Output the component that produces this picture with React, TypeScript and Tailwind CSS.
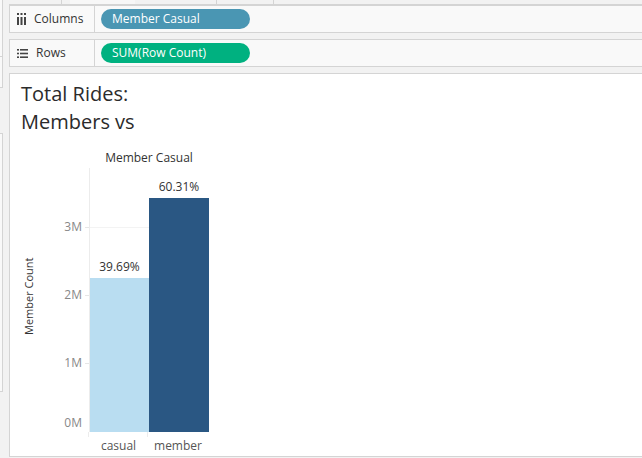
const font = { fontFamily: '"Open Sans", "Liberation Sans", sans-serif' };

const ColumnsIcon = () => (
  <svg width="9" height="12" viewBox="0 0 9 12" className="shrink-0">
    <rect x="0" y="0" width="2" height="2" fill="#444" />
    <rect x="3.5" y="0" width="2" height="2" fill="#444" />
    <rect x="7" y="0" width="2" height="2" fill="#444" />
    <rect x="0" y="4" width="2" height="8" fill="#444" />
    <rect x="3.5" y="4" width="2" height="8" fill="#444" />
    <rect x="7" y="4" width="2" height="8" fill="#444" />
  </svg>
);

const RowsIcon = () => (
  <svg width="11" height="9" viewBox="0 0 11 9" className="shrink-0">
    <rect x="0" y="0" width="2" height="1.6" fill="#444" />
    <rect x="3" y="0" width="8" height="1.6" fill="#444" />
    <rect x="0" y="3.7" width="2" height="1.6" fill="#444" />
    <rect x="3" y="3.7" width="8" height="1.6" fill="#444" />
    <rect x="0" y="7.4" width="2" height="1.6" fill="#444" />
    <rect x="3" y="7.4" width="8" height="1.6" fill="#444" />
  </svg>
);

const Shelf = ({ icon, label, pill, color }: { icon: React.ReactNode; label: string; pill: string; color: string }) => (
  <div className="flex h-[28px] border border-[#d4d4d4] border-r-0 bg-[#f9f9f9]">
    <div className="flex w-[85px] items-center gap-[8px] border-r border-[#d4d4d4] pl-[7px] text-[12px] text-[#333]">
      {icon}
      <span>{label}</span>
    </div>
    <div className="flex items-center pl-[6px]">
      <div className={`flex h-[20px] w-[149px] items-center rounded-full pl-[11px] text-[12px] text-white ${color}`}>
        {pill}
      </div>
    </div>
  </div>
);

const ticks = [
  { label: '3M', y: 59 },
  { label: '2M', y: 127 },
  { label: '1M', y: 195 },
  { label: '0M', y: 255 },
];

const bars = [
  { name: 'casual', pct: '39.69%', h: 154, color: 'bg-[#b9ddf1]', w: 'w-[59px]' },
  { name: 'member', pct: '60.31%', h: 234, color: 'bg-[#2a5783]', w: 'w-[60px]' },
];

export default function App() {
  return (
    <div className="flex h-[458px] w-[642px] overflow-hidden bg-[#f2f2f2]" style={font}>
      {/* side panels */}
      <div className="flex w-[9px] shrink-0 flex-col">
        <div className="h-[57px] w-[3px] border-b border-r border-[#d4d4d4] bg-[#f9f9f9]" />
        <div className="h-[31px] w-[3px] border-b border-r border-[#d4d4d4] bg-[#f9f9f9]" />
        <div className="mt-[45px] h-[259px] w-[3px] border-y border-r border-[#d4d4d4] bg-[#f9f9f9]" />
      </div>

      <div className="flex min-w-0 flex-1 flex-col">
        {/* top strip */}
        <div className="flex h-[5px] border-b border-[#d4d4d4]">
          <div className="w-[53px] border-r border-[#d4d4d4]" />
          <div className="ml-[8px] w-[65px] bg-[#f7f7f7]" />
          <div className="w-[82px] border-r border-[#d4d4d4]" />
          <div className="w-[57px] border-r border-[#d4d4d4]" />
        </div>

        <Shelf icon={<ColumnsIcon />} label="Columns" pill="Member Casual" color="bg-[#4a96b3]" />
        <div className="mt-[6px]">
          <Shelf icon={<RowsIcon />} label="Rows" pill="SUM(Row Count)" color="bg-[#00b180]" />
        </div>

        {/* view */}
        <div className="mt-[6px] flex h-[384px] flex-col border border-r-0 border-[#d4d4d4] bg-white">
          <div className="pl-[11px] pt-[6px] text-[20px] leading-[28px] text-[#2b2b2b]">
            <div>Total Rides:</div>
            <div>Members vs</div>
          </div>

          <div className="flex items-start">
            {/* axis title */}
            <div className="flex h-[264px] w-[40px] mt-[28px] items-center justify-center">
              <span className="-rotate-90 whitespace-nowrap text-[11px] text-[#333]">Member Count</span>
            </div>

            {/* axis labels */}
            <div className="w-[39px] pt-[32px]">
              <div className="relative h-[264px]">
                {ticks.map((t) => (
                  <div
                    key={t.label}
                    className="absolute right-0 flex -translate-y-1/2 items-center gap-[3px] text-[12px] leading-[16px] text-[#888]"
                    style={{ top: t.y }}
                  >
                    <span>{t.label}</span>
                    <span className={`h-px w-[4px] ${t.label === '0M' ? 'bg-transparent' : 'bg-[#e6e6e6]'}`} />
                  </div>
                ))}
              </div>
            </div>

            {/* plot */}
            <div className="flex flex-col">
              <div className="h-[32px] pt-[14px] text-center text-[12px] leading-[16px] text-[#333]">Member Casual</div>
              <div className="relative flex h-[264px] items-end border-l border-[#ececec]">
                <div className="absolute left-0 right-0 top-[59px] h-px bg-[#f3f3f3]" />
                <div className="absolute left-0 right-0 top-[127px] h-px bg-[#f3f3f3]" />
                <div className="absolute left-0 right-0 top-[195px] h-px bg-[#f3f3f3]" />
                {bars.map((b) => (
                  <div key={b.name} className={`relative flex flex-col items-center ${b.w}`}>
                    <div className="mb-[3px] text-[12px] leading-[16px] text-[#333]">{b.pct}</div>
                    <div className={`w-full ${b.color}`} style={{ height: b.h }} />
                  </div>
                ))}
              </div>
              <div className="flex h-[23px]">
                {bars.map((b) => (
                  <div
                    key={b.name}
                    className={`relative flex ${b.w} justify-center pt-[6px] text-[12px] leading-[16px] text-[#555]`}
                  >
                    <span className="absolute left-[-1px] top-0 h-[5px] w-px bg-[#ececec]" />
                    {b.name}
                  </div>
                ))}
              </div>
            </div>
          </div>
        </div>
      </div>
    </div>
  );
}
